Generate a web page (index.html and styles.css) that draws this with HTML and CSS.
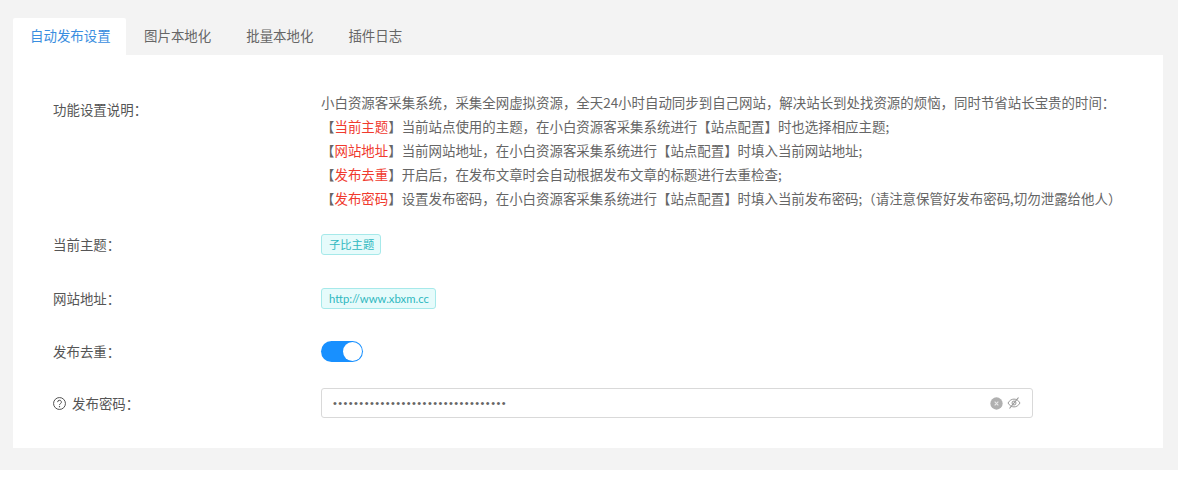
FILE: index.html
```html
<!DOCTYPE html>
<html lang="zh">
<head>
<meta charset="utf-8">
<title>自动发布设置</title>
<link rel="stylesheet" href="styles.css">
</head>
<body>
<div class="page">
  <div class="tabs">
    <div class="tab active">自动发布设置</div>
    <div class="tab">图片本地化</div>
    <div class="tab">批量本地化</div>
    <div class="tab">插件日志</div>
  </div>
  <div class="panel">
    <div class="row row-desc">
      <div class="label">功能设置说明：</div>
      <div class="desc">
        <div>小白资源客采集系统，采集全网虚拟资源，全天24小时自动同步到自己网站，解决站长到处找资源的烦恼，同时节省站长宝贵的时间：</div>
        <div>【<b>当前主题</b>】当前站点使用的主题，在小白资源客采集系统进行【站点配置】时也选择相应主题;</div>
        <div>【<b>网站地址</b>】当前网站地址，在小白资源客采集系统进行【站点配置】时填入当前网站地址;</div>
        <div>【<b>发布去重</b>】开启后，在发布文章时会自动根据发布文章的标题进行去重检查;</div>
        <div>【<b>发布密码</b>】设置发布密码，在小白资源客采集系统进行【站点配置】时填入当前发布密码;（请注意保管好发布密码,切勿泄露给他人）</div>
      </div>
    </div>
    <div class="row row-tag">
      <div class="label">当前主题：</div>
      <span class="tag">子比主题</span>
    </div>
    <div class="row row-tag">
      <div class="label">网站地址：</div>
      <span class="tag">http://www.xbxm.cc</span>
    </div>
    <div class="row row-switch">
      <div class="label">发布去重：</div>
      <span class="switch"><span class="knob"></span></span>
    </div>
    <div class="row row-input">
      <div class="label">
        <svg class="help" viewBox="0 0 14 14" width="13" height="13"><circle cx="7" cy="7" r="6.400" fill="none" stroke="#444" stroke-width="1"/><path d="M5 5.500a2 2 0 1 1 3 1.700c-.7.400-1 .8-1 1.500" fill="none" stroke="#444" stroke-width="1"/><circle cx="7" cy="10.400" r=".7" fill="#444"/></svg>
        发布密码：
      </div>
      <div class="input">
        <span class="dots">•••••••••••••••••••••••••••••••••</span>
        <svg class="clear" viewBox="0 0 12 12" width="13" height="13"><circle cx="6" cy="6" r="5.700" fill="#b0b0b0"/><path d="M4.300 4.300l3.400 3.400M7.700 4.300L4.300 7.700" stroke="#e8e8e8" stroke-width="1"/></svg>
        <svg class="eye" viewBox="0 0 14 14" width="14" height="14"><path d="M1 7c1.600-2.600 3.600-3.900 6-3.900S11.400 4.400 13 7c-1.600 2.600-3.600 3.900-6 3.900S2.600 9.600 1 7z" fill="none" stroke="#999" stroke-width="1"/><circle cx="7" cy="7" r="2" fill="none" stroke="#999" stroke-width="1"/><path d="M11.500 1.500L2.500 12.500" stroke="#999" stroke-width="1.100"/></svg>
      </div>
    </div>
  </div>
</div>
</body>
</html>
```
FILE: styles.css
```css
* { box-sizing: border-box; }
html, body { margin: 0; background: #fff; }
body { font-family: "Noto Sans CJK SC", "Open Sans", sans-serif; font-size: 13px; color: #555; }
.page { height: 470px; background: #f3f3f3; padding: 18px 15px 0 13px; }
.tabs { display: flex; height: 37px; }
.tab { padding: 0 17px 0 18px; line-height: 35px; color: #666; font-size: 13.440px; white-space: nowrap; }
.tab.active { width: 113px; padding: 0 0 0 17px; background: #fff; color: #3a8ee0; border-radius: 2px 2px 0 0; }
.panel { height: 393px; background: #fff; padding: 35px 0 0 40px; }
.row { display: flex; align-items: center; }
.label { width: 268px; flex: none; color: #555; font-size: 13.440px; display: flex; align-items: center; gap: 6px; }
.row-desc { align-items: flex-start; }
.row-desc .label { padding-top: 9px; }
.desc { font-size: 13.440px; line-height: 24px; color: #666; white-space: nowrap; }
.desc b { font-weight: 400; color: #f03a2e; }
.row-tag { height: 24px; }
.row-desc + .row-tag { margin-top: 22px; }
.row-tag + .row-tag { margin-top: 30px; }
.tag { height: 21px; line-height: 19px; padding: 0 6px 0 7px; font-family: "Lato", "Noto Sans CJK SC", sans-serif; font-size: 11.300px; color: #2eb8c0; background: #e6fbfb; border: 1px solid #a6e9ea; border-radius: 3px; }
.row-switch { height: 22px; margin-top: 30px; }
.switch { width: 42px; height: 21px; border-radius: 11px; background: #1890ff; position: relative; display: block; }
.knob { position: absolute; right: 1px; top: 1px; width: 19px; height: 19px; border-radius: 50%; background: #fff; }
.row-input { height: 30px; margin-top: 26px; }
.input { width: 712px; height: 30px; border: 1px solid #d9d9d9; border-radius: 3px; display: flex; align-items: center; padding: 0 9px 0 11px; }
.dots { flex: 1; font-family: "Liberation Sans", sans-serif; font-size: 11px; letter-spacing: 1.420px; color: #666; }
.clear { margin-right: 4px; }
.eye { margin-right: 2px; }
```
